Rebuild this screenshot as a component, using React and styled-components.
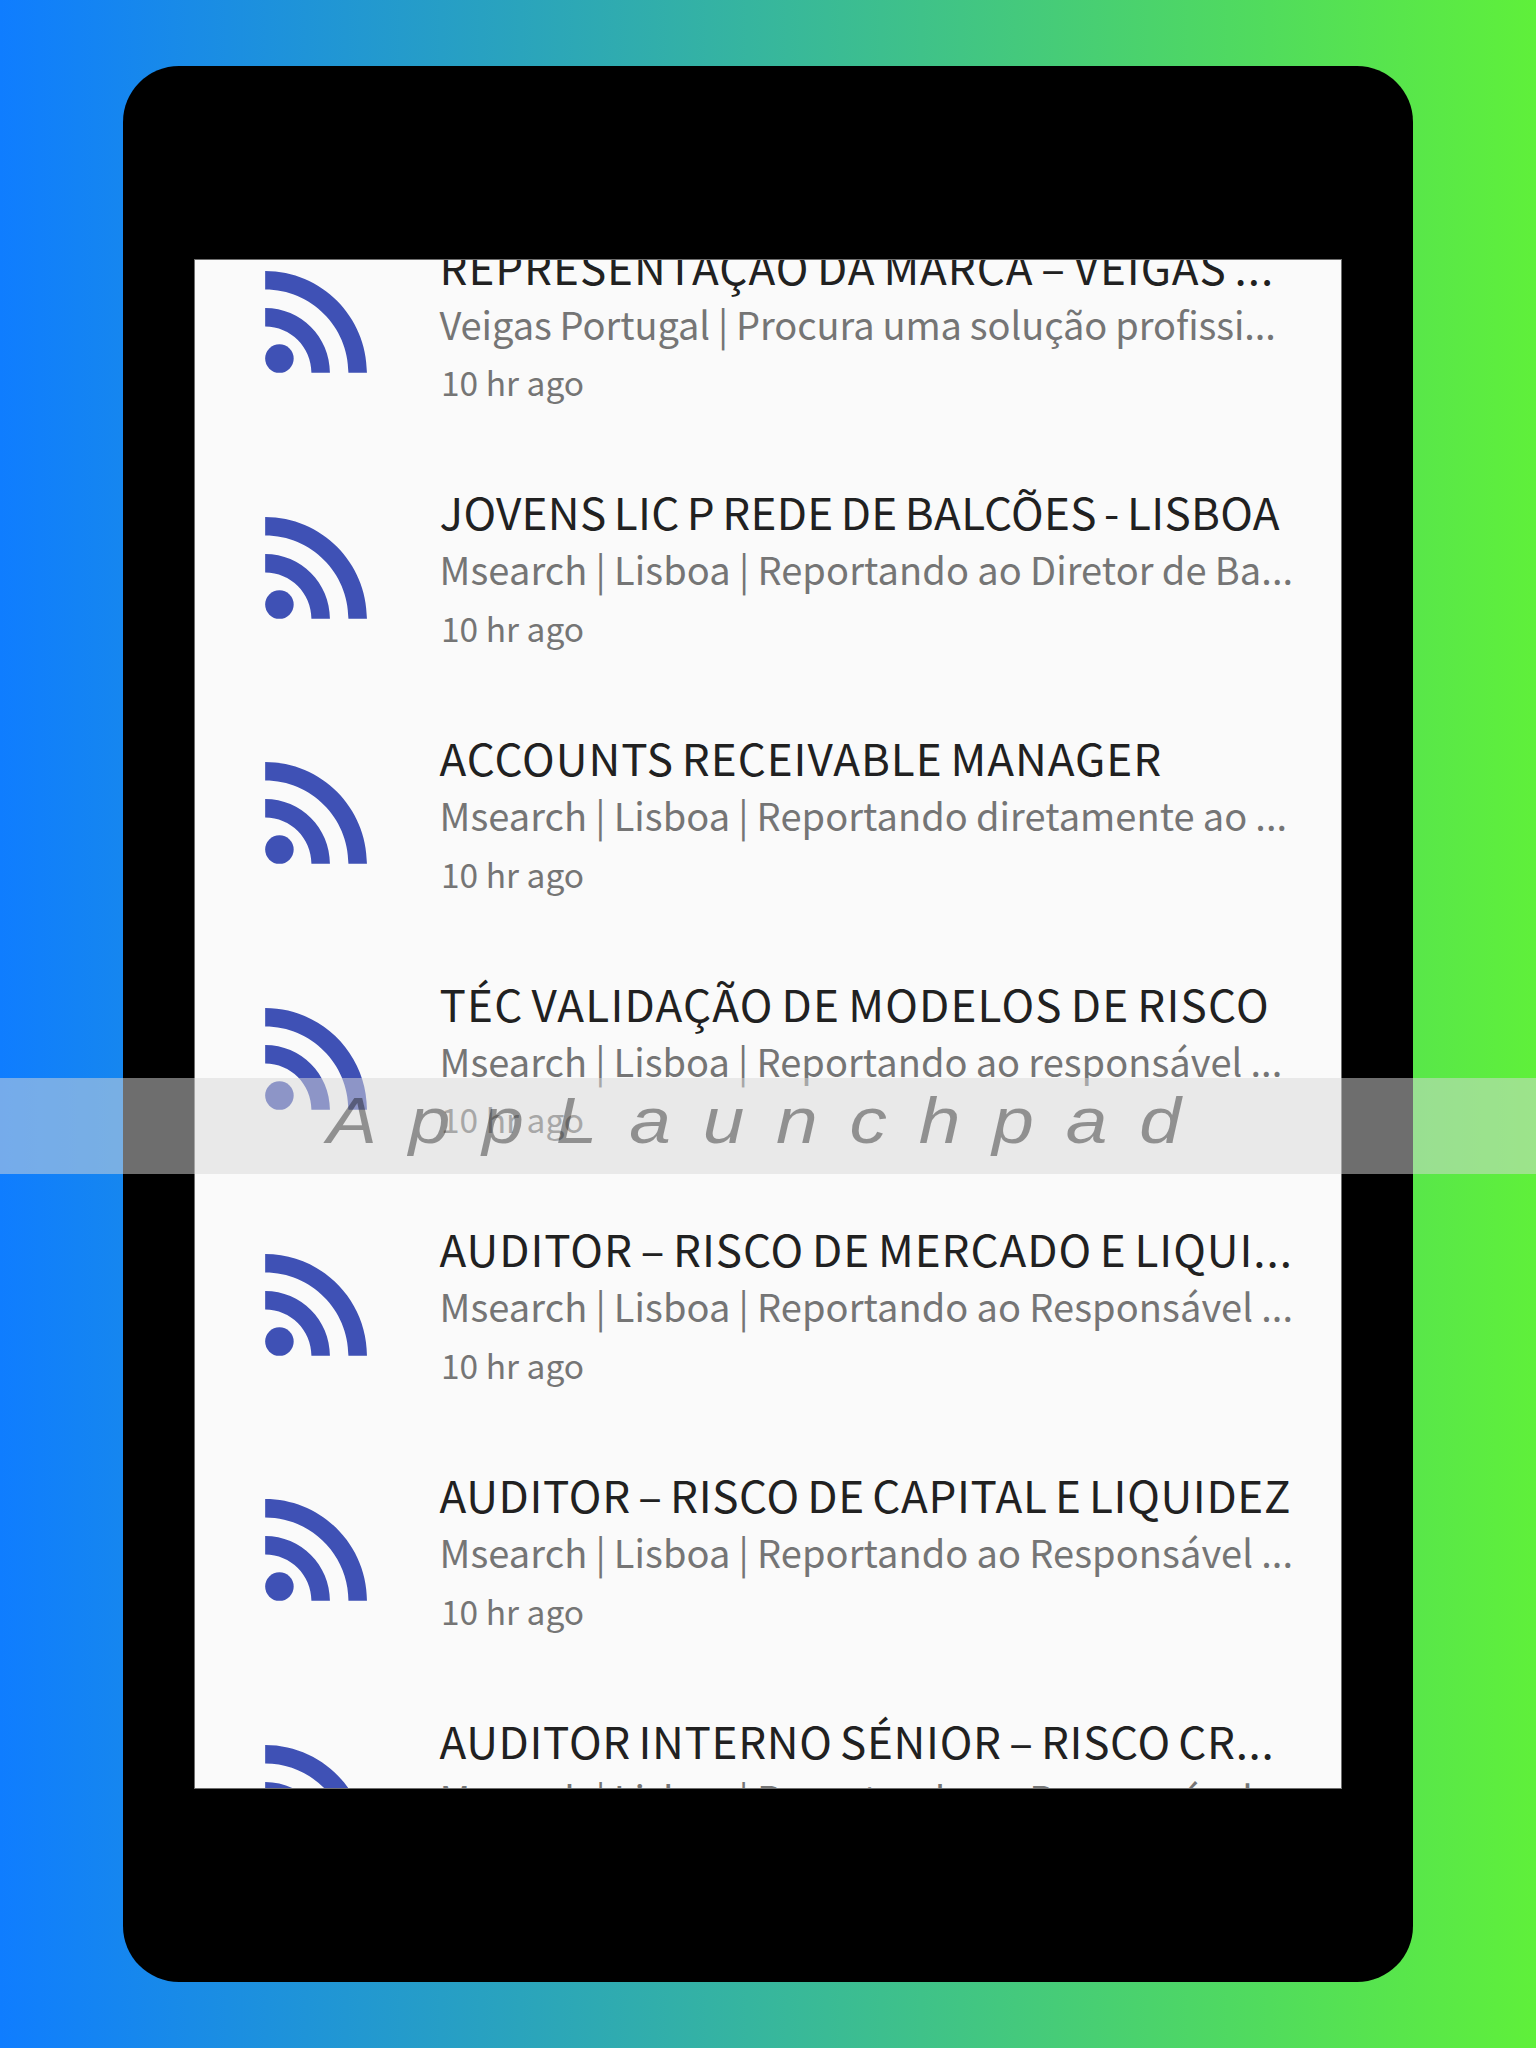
import React from "react";
import styled, { createGlobalStyle } from "styled-components";

const jobs = [
  {
    title: "REPRESENTAÇÃO DA MARCA – VEIGAS ...",
    tracking: 0.97,
    summary: "Veigas Portugal | Procura uma solução profissi...",
    summaryTracking: -0.08,
  },
  {
    title: "JOVENS LIC P REDE DE BALCÕES - LISBOA",
    tracking: 0.34,
    summary: "Msearch | Lisboa | Reportando ao Diretor de Ba...",
    summaryTracking: 0.1,
  },
  {
    title: "ACCOUNTS RECEIVABLE MANAGER",
    tracking: 1,
    summary: "Msearch | Lisboa | Reportando diretamente ao ...",
    summaryTracking: 0.06,
  },
  {
    title: "TÉC VALIDAÇÃO DE MODELOS DE RISCO",
    tracking: 1.2,
    summary: "Msearch | Lisboa | Reportando ao responsável ...",
    summaryTracking: 0.05,
  },
  {
    title: "AUDITOR – RISCO DE MERCADO E LIQUI...",
    tracking: 0.96,
    summary: "Msearch | Lisboa | Reportando ao Responsável ...",
    summaryTracking: 0.08,
  },
  {
    title: "AUDITOR – RISCO DE CAPITAL E LIQUIDEZ",
    tracking: 0.66,
    summary: "Msearch | Lisboa | Reportando ao Responsável ...",
    summaryTracking: 0.08,
  },
  {
    title: "AUDITOR INTERNO SÉNIOR – RISCO CR...",
    tracking: 0.68,
    summary: "Msearch | Lisboa | Reportando ao Responsável ...",
    summaryTracking: 0.08,
  },
];

const RssIcon = () => (
  <Icon viewBox="0 0 24 24">
    <circle cx="6.18" cy="17.82" r="2.18" />
    <path d="M4 4.44v2.83c7.03 0 12.73 5.7 12.73 12.73h2.83c0-8.59-6.97-15.56-15.56-15.56zm0 5.66v2.83c3.9 0 7.07 3.17 7.07 7.07h2.83c0-5.47-4.43-9.9-9.9-9.9z" />
  </Icon>
);

const App = () => {
  return (
    <Page>
      <GlobalStyle />
      <Tablet>
        <Screen>
          <Feed>
            {jobs.map((job) => (
              <Job key={job.title}>
                <RssIcon />
                <Details>
                  <Title $tracking={job.tracking}>{job.title}</Title>
                  <Summary $tracking={job.summaryTracking}>
                    {job.summary}
                  </Summary>
                  <Time>10 hr ago</Time>
                </Details>
              </Job>
            ))}
          </Feed>
        </Screen>
      </Tablet>
      <Watermark>
        <WatermarkText>AppLaunchpad</WatermarkText>
      </Watermark>
    </Page>
  );
};

const GlobalStyle = createGlobalStyle`
  body {
    margin: 0;
  }
`;
const Page = styled.div`
  position: relative;
  display: flex;
  align-items: center;
  justify-content: center;
  width: 1536px;
  height: 2048px;
  overflow: hidden;
  background: linear-gradient(to right, #0f7dff, #5ff03a);
  font-family: "Noto Sans CJK SC", "Noto Sans", sans-serif;
`;
const Tablet = styled.main`
  display: flex;
  align-items: center;
  justify-content: center;
  width: 1290px;
  height: 1916px;
  border-radius: 56px;
  background: #000000;
`;
const Screen = styled.section`
  box-sizing: border-box;
  width: 1148px;
  height: 1530px;
  overflow: hidden;
  border: 1px solid #6e6e6e;
  background: #fafafa;
`;
/* the list is scrolled part way into its first item */
const Feed = styled.ul`
  margin: -60px 0 0;
  padding: 0;
  list-style: none;
`;
const Job = styled.li`
  box-sizing: border-box;
  display: flex;
  align-items: flex-start;
  gap: 44px;
  height: 245.7px;
  padding: 36.6px 0 0 43.5px;
`;
const Icon = styled.svg`
  flex: none;
  width: 157px;
  height: 157px;
  margin-top: 5.4px;
  fill: #3f51b5;
`;
const Details = styled.div`
  white-space: nowrap;
`;
const Title = styled.h2`
  margin: 0;
  color: #212121;
  font-size: 44px;
  font-weight: 400;
  line-height: 58px;
  letter-spacing: ${(props) => props.$tracking}px;
  word-spacing: -3px;
`;
const Summary = styled.p`
  margin: 0;
  color: #757575;
  font-size: 38px;
  line-height: 58.8px;
  letter-spacing: ${(props) => props.$tracking}px;
  word-spacing: -0.5px;
`;
const Time = styled.p`
  margin: 0;
  padding-left: 1.5px;
  color: #757575;
  font-size: 33.5px;
  line-height: 57px;
`;
const Watermark = styled.div`
  position: absolute;
  top: 1078px;
  left: 0;
  right: 0;
  height: 96px;
  padding-left: 327px;
  background: rgba(215, 215, 215, 0.508);
`;
const WatermarkText = styled.span`
  display: inline-block;
  color: rgba(0, 0, 0, 0.38);
  font: italic 64px / 86px "Liberation Sans", Arial, sans-serif;
  letter-spacing: 27.2px;
  transform: scaleX(1.17);
  transform-origin: left;
`;

export default App;
